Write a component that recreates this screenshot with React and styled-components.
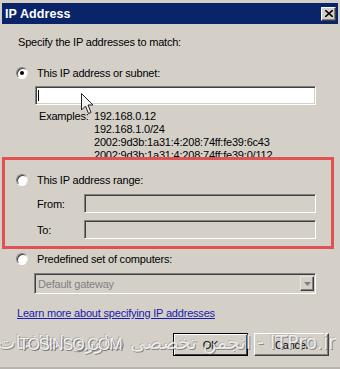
import styled, { createGlobalStyle } from 'styled-components';

const GlobalStyle = createGlobalStyle`
  html, body { margin: 0; padding: 0; background: #d4d0c8; }
  body { font-family: "Liberation Sans", Arial, sans-serif; }
`;

const Frame = styled.div`
  position: relative;
  width: 340px;
  height: 369px;
  box-sizing: border-box;
  padding: 3px 2px 0 2px;
  background: #d4d0c8;
  overflow: hidden;
  font-size: 11px;
  letter-spacing: -0.2px;
  color: #000;
  border-bottom: 2px solid #b8b4ac;
`;

const TitleBar = styled.div`
  height: 21px;
  background: #0a246a;
  display: flex;
  align-items: center;
  justify-content: space-between;
  padding: 0 2px 0 3px;
`;

const Title = styled.div`
  color: #fff;
  font-weight: bold;
  font-size: 12.5px;
  letter-spacing: 0.1px;
`;

const CloseBtn = styled.div`
  width: 13px;
  height: 12px;
  background: #d4d0c8;
  border: 1px solid;
  border-color: #fff #404040 #404040 #fff;
  box-shadow: inset -1px -1px #808080;
  display: flex;
  align-items: center;
  justify-content: center;
`;

const Body = styled.div`
  display: flex;
  flex-direction: column;
  padding-top: 12px;
`;

const Line = styled.div`
  line-height: 13px;
  padding-left: ${p => p.$indent || 16}px;
  margin-top: ${p => p.$mt || 0}px;
  white-space: nowrap;
`;

const RadioRow = styled.div`
  display: flex;
  align-items: center;
  gap: 9px;
  height: 14px;
  padding-left: ${p => p.$indent ?? 14}px;
  margin-top: ${p => p.$mt || 0}px;
`;

const Radio = styled.div`
  width: 10px;
  height: 10px;
  border-radius: 50%;
  background: #fff;
  border: 1px solid;
  border-color: #808080 #e8e6e0 #fff #808080;
  box-shadow: inset 1px 1px #404040;
  display: flex;
  align-items: center;
  justify-content: center;
  &::after {
    content: '';
    display: ${p => (p.$checked ? 'block' : 'none')};
    width: 4px;
    height: 4px;
    border-radius: 50%;
    background: #000;
  }
`;

const Field = styled.div`
  position: relative;
  box-sizing: border-box;
  height: ${p => p.$h || 19}px;
  width: ${p => p.$w}px;
  margin-left: ${p => p.$ml || 0}px;
  margin-top: ${p => p.$mt || 0}px;
  background: ${p => (p.$disabled ? '#d4d0c8' : '#fff')};
  border: 1px solid;
  border-color: #808080 #fff #fff #808080;
  box-shadow: inset 1px 1px #404040, inset -1px -1px #d4d0c8;
  display: flex;
  align-items: center;
`;

const Caret = styled.span`
  width: 1px;
  height: 11px;
  background: #000;
  margin-left: 2px;
`;

const Examples = styled.div`
  display: flex;
  padding-left: 37px;
  margin-top: 5px;
  height: 47px;
  overflow: hidden;
  line-height: 13px;
  white-space: nowrap;
`;

const ExampleLabel = styled.span`
  width: 55px;
`;

const ExampleList = styled.div`
  display: flex;
  flex-direction: column;
`;

const RangeBox = styled.div`
  border: 3px solid #e05252;
  margin-right: 4px;
  padding: 13px 0 7px 0;
  display: flex;
  flex-direction: column;
`;

const FieldRow = styled.div`
  display: flex;
  align-items: center;
  padding-left: 32px;
  margin-top: 7px;
`;

const FieldLabel = styled.span`
  width: 47px;
`;

const Select = styled(Field)`
  justify-content: space-between;
  padding-left: 3px;
  padding-right: 1px;
  color: #808080;
`;

const DropBtn = styled.div`
  width: 14px;
  height: 15px;
  box-sizing: border-box;
  background: #d4d0c8;
  border: 1px solid;
  border-color: #e8e6e0 #404040 #404040 #e8e6e0;
  box-shadow: inset -1px -1px #808080;
  display: flex;
  align-items: center;
  justify-content: center;
`;

const Link = styled.a`
  color: #1a1ab0;
  text-decoration: underline;
  line-height: 13px;
  padding-left: 15px;
  margin-top: 13px;
`;

const ButtonBar = styled.div`
  display: flex;
  justify-content: flex-end;
  gap: 6px;
  padding-right: 9px;
  margin-top: 13px;
`;

const Button = styled.div`
  width: 75px;
  height: 23px;
  box-sizing: border-box;
  background: #d4d0c8;
  border: 1px solid;
  border-color: ${p => (p.$default ? '#000' : '#fff #404040 #404040 #fff')};
  box-shadow: ${p => (p.$default ? 'inset 1px 1px #fff, inset -1px -1px #404040' : 'inset -1px -1px #808080')};
  display: flex;
  align-items: center;
  justify-content: center;
`;

const Pointer = styled.svg`
  position: absolute;
  left: 81px;
  top: 93px;
`;

const Watermark = styled.div`
  position: absolute;
  left: 0;
  right: 4px;
  top: 331px;
  height: 30px;
  direction: rtl;
  white-space: nowrap;
  overflow: hidden;
  font-family: "DejaVu Sans", sans-serif;
  font-size: 19px;
  letter-spacing: normal;
  color: rgba(255, 255, 255, 0.8);
  text-shadow: 1px 1px 0 rgba(90, 90, 90, 0.6), -1px -1px 0 rgba(150, 150, 150, 0.45);
  pointer-events: none;
`;

const Stamp = styled.div`
  position: absolute;
  left: 19px;
  top: 336px;
  font-family: "Liberation Sans", sans-serif;
  font-size: 16px;
  letter-spacing: -1px;
  color: rgba(255, 255, 255, 0.85);
  text-shadow: 1px 1px 0 rgba(90, 90, 90, 0.7), -1px -1px 0 rgba(150, 150, 150, 0.5);
  pointer-events: none;
`;

export default function App() {
  return (
    <>
      <GlobalStyle />
      <Frame>
        <TitleBar>
          <Title>IP Address</Title>
          <CloseBtn>
            <svg width="8" height="7" viewBox="0 0 8 7">
              <path d="M0 0 L8 7 M8 0 L0 7" stroke="#000" strokeWidth="1.6" />
            </svg>
          </CloseBtn>
        </TitleBar>
        <Body>
          <Line>Specify the IP addresses to match:</Line>

          <RadioRow $mt={17}>
            <Radio $checked />
            <span>This IP address or subnet:</span>
          </RadioRow>
          <Field $w={281} $ml={33} $mt={6}>
            <Caret />
          </Field>
          <Examples>
            <ExampleLabel>Examples:</ExampleLabel>
            <ExampleList>
              <span>192.168.0.12</span>
              <span>192.168.1.0/24</span>
              <span>2002:9d3b:1a31:4:208:74ff:fe39:6c43</span>
              <span>2002:9d3b:1a31:4:208:74ff:fe39:0/112</span>
            </ExampleList>
          </Examples>

          <RangeBox>
            <RadioRow $indent={11}>
              <Radio />
              <span>This IP address range:</span>
            </RadioRow>
            <FieldRow>
              <FieldLabel>From:</FieldLabel>
              <Field $w={232} $disabled />
            </FieldRow>
            <FieldRow>
              <FieldLabel>To:</FieldLabel>
              <Field $w={232} $disabled />
            </FieldRow>
          </RangeBox>

          <RadioRow $mt={3}>
            <Radio />
            <span>Predefined set of computers:</span>
          </RadioRow>
          <Select $w={282} $h={21} $ml={32} $mt={7} $disabled>
            <span>Default gateway</span>
            <DropBtn>
              <svg width="7" height="4" viewBox="0 0 7 4">
                <path d="M0 0 L7 0 L3.5 4 Z" fill="#808080" />
              </svg>
            </DropBtn>
          </Select>

          <Link>Learn more about specifying IP addresses</Link>

          <ButtonBar>
            <Button $default>OK</Button>
            <Button>Cancel</Button>
          </ButtonBar>
        </Body>

        <Pointer width="13" height="22" viewBox="0 0 13 22">
          <path d="M0.5 0.5 L0.5 17 L4.5 13 L7.5 20.5 L10 19.5 L7 12 L12 12 Z" fill="#f4f4f4" stroke="#222" strokeWidth="1" />
        </Pointer>
        <Watermark>ITPro.ir - انجمن تخصصی فناوری اطلاعات ایران</Watermark>
        <Stamp>TOSINSO.COM</Stamp>
      </Frame>
    </>
  );
}
